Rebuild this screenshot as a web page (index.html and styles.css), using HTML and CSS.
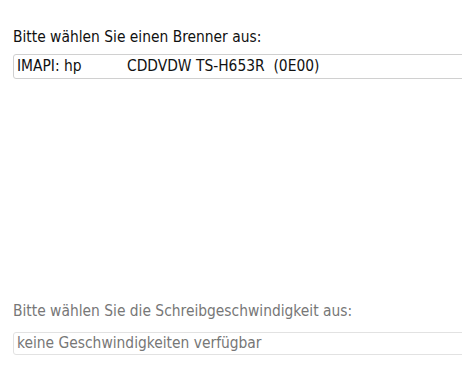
FILE: index.html
```html
<!DOCTYPE html>
<html lang="de">
<head>
    <meta charset="UTF-8">
    <title>Brenner</title>
    <link rel="stylesheet" href="styles.css">
</head>
<body>
    <div class="panel">
        <div class="group burner">
            <p class="label">Bitte wählen Sie einen Brenner aus:</p>
            <div class="select">
                <span class="drive">IMAPI: hp</span><span>CDDVDW TS-H653R&nbsp;&nbsp;(0E00)</span>
            </div>
        </div>

        <div class="group speed">
            <p class="label">Bitte wählen Sie die Schreibgeschwindigkeit aus:</p>
            <div class="select">
                <span>keine Geschwindigkeiten verfügbar</span>
            </div>
        </div>
    </div>
</body>
</html>
```

FILE: styles.css
```css
body {
    margin: 0;
    background: #fff;
    font-family: "DejaVu Sans Condensed", "DejaVu Sans", sans-serif;
    font-size: 15.4px;
    color: #111;
}
.panel {
    display: flex;
    flex-direction: column;
    padding: 28px 0 0 13px;
}
.label {
    margin: 0;
    line-height: 18px;
}
.select {
    height: 23px;
    line-height: 23px;
    margin-right: -10px;
    padding-left: 3px;
    border: 1px solid #d0d0d0;
    border-radius: 3px 0 0 3px;
}
.burner .label {
    margin-bottom: 8px;
}
.drive {
    display: inline-block;
    width: 110px;
}
.speed {
    margin-top: 223px;
    color: #777;
}
.speed .label {
    margin-bottom: 12px;
}
.speed .select {
    height: 21px;
    line-height: 21px;
    border-color: #e2e2e2;
}
```
